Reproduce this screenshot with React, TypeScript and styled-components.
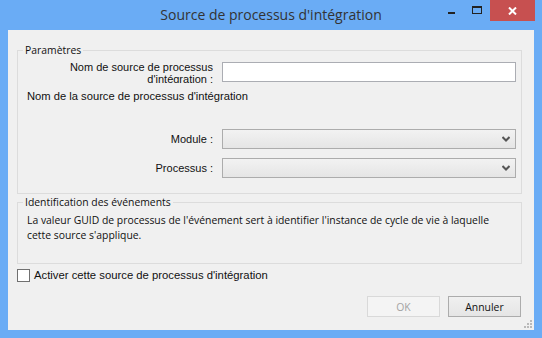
import React from 'react'
import styled, { createGlobalStyle } from 'styled-components'

// deux polices dans la capture : Segoe UI (groupes, boutons) et MS Sans Serif (libellés)
const SEGOE = '"Open Sans", "Noto Sans", sans-serif';
const MSSANS = '"Liberation Sans", Arial, sans-serif';

const GlobalStyle = createGlobalStyle`
    html, body {
        margin: 0;
        padding: 0;
        background: #6aacf5;
    }
    body {
        font-family: ${SEGOE};
        font-size: 10.4px;
        color: #111;
    }
`;

const Window = styled.div`
    width: 542px;
    height: 338px;
    background: #6aacf5; /* bordure Windows 8 */
    display: flex;
    flex-direction: column;
`;

const TitleBar = styled.div`
    height: 30px;
    display: grid;
    grid-template-columns: 1fr auto 1fr;
`;

const Title = styled.div`
    grid-column: 2;
    font-size: 14px;
    line-height: 30px;
    color: #333;
    white-space: nowrap;
`;

const Controls = styled.div`
    grid-column: 3;
    justify-self: end;
    align-self: start;
    display: flex;
    margin-right: 7px;
`;

const CtrlButton = styled.div<{ $close?: boolean }>`
    width: ${p => (p.$close ? 45 : 26)}px;
    height: 21px;
    display: flex;
    align-items: center;
    justify-content: center;
    background: ${p => (p.$close ? '#c75050' : 'transparent')};
`;

const MinGlyph = styled.div`
    width: 7px;
    height: 2px;
    margin-top: 5px;
    background: #222;
`;

const MaxGlyph = styled.div`
    width: 8px;
    height: 5px;
    border: 1px solid #222;
    border-top-width: 2px;
    margin-top: -2px;
`;

const Body = styled.div`
    position: relative;
    flex: 1;
    margin: 0 8px 8px;
    background: #f0f0f0;
    padding: 13px 12px 0 9px;
    display: flex;
    flex-direction: column;
`;

const Group = styled.fieldset<{ $gap?: number }>`
    margin: ${p => p.$gap ?? 0}px 0 0;
    min-inline-size: 0;
    border: 1px solid #dcdcdc;
    padding: 0 5px 0 9px;
`;

const Legend = styled.legend`
    padding: 0 2px;
    margin-left: -4px;
    line-height: 15px;
    color: #111;
`;

const FieldRow = styled.div<{ $top?: number }>`
    display: grid;
    grid-template-columns: 186px 1fr;
    column-gap: 9px;
    align-items: center;
    margin-top: ${p => p.$top ?? 0}px;
`;

const Label = styled.label<{ $clip?: boolean }>`
    font-family: ${MSSANS};
    font-size: 11px;
    text-align: right;
    line-height: ${p => (p.$clip ? '12px' : '14px')};
    height: ${p => (p.$clip ? '22px' : 'auto')};
    overflow: ${p => (p.$clip ? 'hidden' : 'visible')};
    white-space: nowrap;
`;

const TextInput = styled.input`
    height: 20px;
    box-sizing: border-box;
    border: 1px solid #abadb3;
    background: #fff;
    padding: 0 3px;
    font: inherit;
`;

const Combo = styled.div`
    height: 20px;
    box-sizing: border-box;
    border: 1px solid #acacac;
    background: linear-gradient(#f2f2f2, #e5e5e5);
    display: flex;
    align-items: center;
    justify-content: flex-end;
    padding-right: 5px;
`;

const Hint = styled.div<{ $top?: number; $bottom?: number; $ms?: boolean }>`
    font-family: ${p => (p.$ms ? MSSANS : SEGOE)};
    font-size: ${p => (p.$ms ? '11.2px' : '10.4px')};
    line-height: 15px;
    white-space: nowrap;
    margin-top: ${p => p.$top ?? 0}px;
    margin-bottom: ${p => p.$bottom ?? 0}px;
`;

const CheckRow = styled.label`
    display: flex;
    align-items: center;
    gap: 4px;
    margin-top: 4px;
    font-family: ${MSSANS};
    font-size: 11.3px;
    line-height: 15px;
`;

const CheckBox = styled.span`
    width: 13px;
    height: 13px;
    box-sizing: border-box;
    border: 1px solid #707070;
    background: #fff;
`;

const ButtonBar = styled.div`
    display: flex;
    justify-content: flex-end;
    gap: 8px;
    margin-top: 13px;
    margin-right: 1px;
`;

const Button = styled.button`
    width: 73px;
    height: 21px;
    box-sizing: border-box;
    font: inherit;
    padding: 0;
    color: #111;
    border: 1px solid #acacac;
    background: linear-gradient(#f0f0f0, #e5e5e5);

    &:disabled {
        color: #a3a3a3;
        border-color: #d9d9d9;
        background: #f4f4f4;
    }
`;

const Grip = styled.svg`
    position: absolute;
    right: 2px;
    bottom: 2px;
`;

const Chevron = () => (
    <svg width="8" height="6" viewBox="0 0 8 6">
        <path d="M0.5 1 L4 4.5 L7.5 1" fill="none" stroke="#555" strokeWidth="2" />
    </svg>
);

const App: React.FC = () => {
    return (
        <Window>
            <GlobalStyle />
            <TitleBar>
                <Title>Source de processus d'intégration</Title>
                <Controls>
                    <CtrlButton><MinGlyph /></CtrlButton>
                    <CtrlButton><MaxGlyph /></CtrlButton>
                    <CtrlButton $close>
                        <svg width="9" height="8" viewBox="0 0 9 8">
                            <path d="M1 0.5 L8 7.5 M8 0.5 L1 7.5" stroke="#fff" strokeWidth="2" />
                        </svg>
                    </CtrlButton>
                </Controls>
            </TitleBar>

            <Body>
                <Group>
                    <Legend>Paramètres</Legend>
                    <FieldRow $top={3}>
                        <Label $clip>Nom de source de processus<br />d'intégration :</Label>
                        <TextInput />
                    </FieldRow>
                    <Hint $ms $top={6}>Nom de la source de processus d'intégration</Hint>
                    <FieldRow $top={25}>
                        <Label>Module :</Label>
                        <Combo><Chevron /></Combo>
                    </FieldRow>
                    <FieldRow $top={9}>
                        <Label>Processus :</Label>
                        <Combo><Chevron /></Combo>
                    </FieldRow>
                    <Hint $bottom={15} />
                </Group>

                <Group $gap={1}>
                    <Legend>Identification des événements</Legend>
                    <Hint $top={3} $bottom={20}>
                        La valeur GUID de processus de l'événement sert à identifier l'instance de cycle de vie à laquelle
                        <br />
                        cette source s'applique.
                    </Hint>
                </Group>

                <CheckRow>
                    <CheckBox />
                    Activer cette source de processus d'intégration
                </CheckRow>

                <ButtonBar>
                    <Button disabled>OK</Button>
                    <Button>Annuler</Button>
                </ButtonBar>

                <Grip width="8" height="8" viewBox="0 0 8 8">
                    <rect x="6" y="0" width="2" height="2" fill="#b9b9b9" />
                    <rect x="3" y="3" width="2" height="2" fill="#b9b9b9" />
                    <rect x="6" y="3" width="2" height="2" fill="#b9b9b9" />
                    <rect x="0" y="6" width="2" height="2" fill="#b9b9b9" />
                    <rect x="3" y="6" width="2" height="2" fill="#b9b9b9" />
                    <rect x="6" y="6" width="2" height="2" fill="#b9b9b9" />
                </Grip>
            </Body>
        </Window>
    );
};

export default App;
